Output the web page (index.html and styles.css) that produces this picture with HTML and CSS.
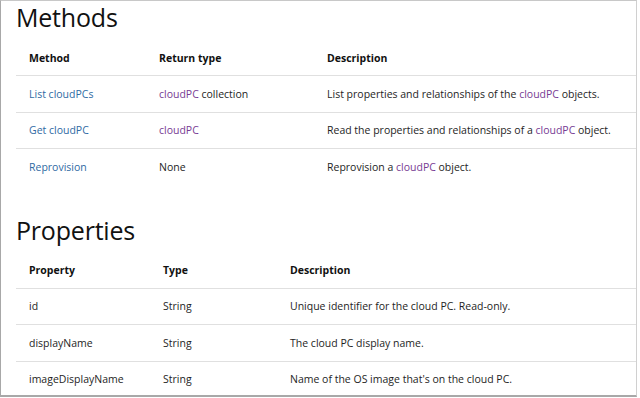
FILE: index.html
```html
<!DOCTYPE html>
<html>
<head>
<meta charset="utf-8">
<link rel="stylesheet" href="styles.css">
</head>
<body>
<div class="frame">
  <h2 class="title">Methods</h2>
  <table class="tbl methods">
    <colgroup><col class="c1"><col class="c2"><col></colgroup>
    <thead>
      <tr><th>Method</th><th>Return type</th><th>Description</th></tr>
    </thead>
    <tbody>
      <tr><td><a class="link">List cloudPCs</a></td><td><a class="visited">cloudPC</a> collection</td><td>List properties and relationships of the <a class="visited">cloudPC</a> objects.</td></tr>
      <tr><td><a class="link">Get cloudPC</a></td><td><a class="visited">cloudPC</a></td><td>Read the properties and relationships of a <a class="visited">cloudPC</a> object.</td></tr>
      <tr class="last"><td><a class="link">Reprovision</a></td><td>None</td><td>Reprovision a <a class="visited">cloudPC</a> object.</td></tr>
    </tbody>
  </table>
  <h2 class="title second">Properties</h2>
  <table class="tbl props">
    <colgroup><col class="c1"><col class="c2"><col></colgroup>
    <thead>
      <tr><th>Property</th><th>Type</th><th>Description</th></tr>
    </thead>
    <tbody>
      <tr><td>id</td><td>String</td><td>Unique identifier for the cloud PC. Read-only.</td></tr>
      <tr><td>displayName</td><td>String</td><td>The cloud PC display name.</td></tr>
      <tr class="last"><td>imageDisplayName</td><td>String</td><td>Name of the OS image that's on the cloud PC.</td></tr>
    </tbody>
  </table>
</div>
</body>
</html>
```
FILE: styles.css
```css
html, body {
  margin: 0;
  padding: 0;
  background: #ffffff;
}
body {
  width: 640px;
  height: 398px;
  overflow: hidden;
  font-family: "Open Sans", "Noto Sans", sans-serif;
  color: #1e1e1e;
}
.frame {
  box-sizing: border-box;
  width: 637px;
  height: 397px;
  border-left: 1px solid #a8a8a8;
  border-top: 1px solid #c8c8c8;
  border-right: 1px solid #d0d0d0;
  border-bottom: 2px solid #a8a8a8;
  padding-left: 15px;
  overflow: hidden;
}
.title {
  margin: 0;
  font-size: 25px;
  font-weight: 400;
  line-height: 32px;
  color: #111111;
  letter-spacing: -0.2px;
}
.title.second {
  margin-top: 29px;
}
.tbl {
  width: 100%;
  border-collapse: collapse;
  table-layout: fixed;
  font-size: 10.5px;
  margin-top: 7px;
}
.methods .c1 { width: 130px; }
.methods .c2 { width: 168px; }
.props .c1 { width: 134px; }
.props .c2 { width: 127px; }
.tbl th {
  text-align: left;
  font-weight: 700;
  padding: 0 0 0 13px;
  height: 35px;
  border-bottom: 1px solid #e0e0e0;
  color: #111111;
}
.tbl td {
  padding: 0 0 0 13px;
  height: 35.5px;
  border-bottom: 1px solid #e0e0e0;
  white-space: nowrap;
}
.tbl tr.last td {
  border-bottom: none;
}
.link {
  color: #2f6aa3;
}
.visited {
  color: #773b93;
}
```
